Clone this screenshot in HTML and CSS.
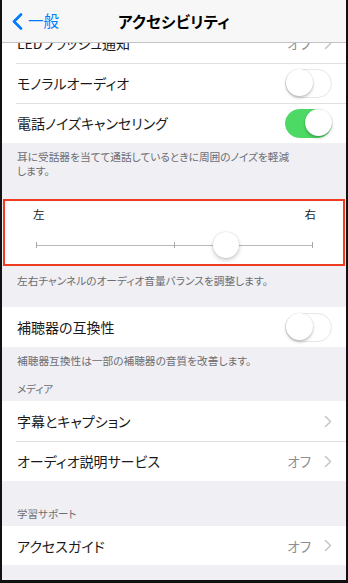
FILE: index.html
```html
<!DOCTYPE html>
<html lang="ja">
<head>
<meta charset="utf-8">
<title>アクセシビリティ</title>
<link rel="stylesheet" href="styles.css">
</head>
<body>
<div class="screen">
  <header class="nav">
    <a class="back">
      <svg class="back-chev" width="11" height="17" viewBox="0 0 11 17"><path d="M9 1.5 L2 8.5 L9 15.5" fill="none" stroke="#007aff" stroke-width="2.6" stroke-linecap="round" stroke-linejoin="round"/></svg>
      <span>一般</span>
    </a>
    <h1 class="title">アクセシビリティ</h1>
    <span class="nav-spacer"></span>
  </header>
  <main class="scroll">
    <section class="group group-first">
      <div class="row"><span class="label">LEDフラッシュ通知</span><span class="detail">オフ</span><svg class="chev" width="8" height="13" viewBox="0 0 8 13"><path d="M1.5 1.5 L6.5 6.5 L1.5 11.5" fill="none" stroke="#c7c7cc" stroke-width="1.6" stroke-linecap="round" stroke-linejoin="round"/></svg></div>
      <div class="row"><span class="label">モノラルオーディオ</span><span class="toggle"><span class="knob"></span></span></div>
      <div class="row"><span class="label">電話ノイズキャンセリング</span><span class="toggle on"><span class="knob"></span></span></div>
    </section>
    <p class="footer footer-1">耳に受話器を当てて通話しているときに周囲のノイズを軽減<br>します。</p>
    <section class="balance">
      <div class="balance-labels"><span>左</span><span>右</span></div>
      <div class="slider">
        <span class="track"></span>
        <span class="tick tick-l"></span>
        <span class="tick tick-m"></span>
        <span class="tick tick-r"></span>
        <span class="thumb" style="left: 68.6%"></span>
      </div>
    </section>
    <p class="footer footer-2">左右チャンネルのオーディオ音量バランスを調整します。</p>
    <section class="group">
      <div class="row"><span class="label">補聴器の互換性</span><span class="toggle"><span class="knob"></span></span></div>
    </section>
    <p class="footer footer-3">補聴器互換性は一部の補聴器の音質を改善します。</p>
    <p class="header header-media">メディア</p>
    <section class="group">
      <div class="row"><span class="label">字幕とキャプション</span><svg class="chev" width="8" height="13" viewBox="0 0 8 13"><path d="M1.5 1.5 L6.5 6.5 L1.5 11.5" fill="none" stroke="#c7c7cc" stroke-width="1.6" stroke-linecap="round" stroke-linejoin="round"/></svg></div>
      <div class="row"><span class="label">オーディオ説明サービス</span><span class="detail">オフ</span><svg class="chev" width="8" height="13" viewBox="0 0 8 13"><path d="M1.5 1.5 L6.5 6.5 L1.5 11.5" fill="none" stroke="#c7c7cc" stroke-width="1.6" stroke-linecap="round" stroke-linejoin="round"/></svg></div>
    </section>
    <p class="header header-learn">学習サポート</p>
    <section class="group">
      <div class="row row-last"><span class="label">アクセスガイド</span><span class="detail">オフ</span><svg class="chev" width="8" height="13" viewBox="0 0 8 13"><path d="M1.5 1.5 L6.5 6.5 L1.5 11.5" fill="none" stroke="#c7c7cc" stroke-width="1.6" stroke-linecap="round" stroke-linejoin="round"/></svg></div>
    </section>
  </main>
</div>
</body>
</html>
```

FILE: styles.css
```css
* { box-sizing: border-box; }
html, body { margin: 0; padding: 0; background: #000; }
body {
  font-family: "Noto Sans CJK JP", "Noto Sans", sans-serif;
  font-feature-settings: "palt" 1;
  -webkit-font-smoothing: antialiased;
}
.screen {
  width: 348px;
  height: 583px;
  border-left: 2px solid #111;
  border-right: 2px solid #111;
  border-bottom: 3px solid #111;
  background: #efeff4;
  display: flex;
  flex-direction: column;
  overflow: hidden;
}
.nav {
  height: 43px;
  flex: none;
  background: #f7f7f7;
  border-bottom: 1px solid #c4c4c6;
  display: grid;
  grid-template-columns: 1fr auto 1fr;
  align-items: center;
  position: relative;
  z-index: 2;
}
.back {
  display: flex;
  align-items: center;
  gap: 5px;
  padding-left: 10px;
  color: #007aff;
  font-size: 15.5px;
  line-height: 1;
}
.back-chev { display: block; margin-top: 1px; }
.title {
  margin: 0;
  font-size: 15.5px;
  font-weight: 700;
  color: #000;
  letter-spacing: 0.2px;
}
.scroll {
  flex: 1;
  overflow: hidden;
  display: flex;
  flex-direction: column;
}
.group { background: #fff; flex: none; }
.group-first { margin-top: -20px; }
.row {
  height: 40px;
  display: flex;
  align-items: center;
  padding: 0 14px 0 15px;
  position: relative;
}
.row-last { height: 39px; }
.row + .row::before {
  content: "";
  position: absolute;
  top: 0;
  left: 14px;
  right: 0;
  height: 1px;
  background: #e0e0e4;
}
.label {
  flex: 1;
  font-size: 14px;
  color: #1a1a1a;
}
.detail {
  font-size: 13.5px;
  color: #8e8e93;
  margin-right: 13px;
}
.chev { display: block; flex: none; }
.toggle {
  width: 47px;
  height: 29px;
  border-radius: 15px;
  background: #fff;
  border: 1.5px solid #e6e6ea;
  position: relative;
  flex: none;
}
.toggle .knob {
  position: absolute;
  top: -0.5px;
  left: -0.5px;
  width: 27px;
  height: 27px;
  border-radius: 50%;
  background: #fff;
  box-shadow: 0 2px 3px rgba(0,0,0,0.22), 0 0 0 0.5px rgba(0,0,0,0.08);
}
.toggle.on { background: #4cd964; border-color: #4cd964; }
.toggle.on .knob { left: auto; right: -0.5px; }
.footer {
  margin: 0;
  font-size: 10.7px;
  line-height: 14px;
  color: #6d6d72;
  padding: 0 15px;
  flex: none;
}
.footer-1 { padding-top: 7px; padding-bottom: 21px; }
.footer-2 { padding-top: 8px; padding-bottom: 19px; }
.footer-3 { padding-top: 7px; padding-bottom: 14px; }
.header {
  margin: 0;
  font-size: 10.5px;
  line-height: 13px;
  color: #6d6d72;
  padding: 0 15px 6px;
  flex: none;
}
.header-learn { padding-top: 26px; }
.balance {
  flex: none;
  height: 67px;
  margin: 0 1px;
  background: #fff;
  border: 2px solid #ef3b22;
  padding: 7px 30px 0 31px;
}
.balance-labels {
  display: flex;
  justify-content: space-between;
  margin: 0 -3px 0 -3px;
  font-size: 11.5px;
  line-height: 13px;
  color: #222;
}
.slider {
  position: relative;
  height: 28px;
  margin-top: 10px;
}
.track {
  position: absolute;
  left: 0;
  right: 0;
  top: 13.5px;
  height: 1px;
  background: #b9b9bd;
}
.tick {
  position: absolute;
  top: 11px;
  width: 1px;
  height: 6px;
  background: #a9a9ad;
}
.tick-l { left: 0; }
.tick-m { left: 50%; margin-left: -1px; }
.tick-r { right: 0; }
.thumb {
  position: absolute;
  top: 1px;
  width: 26px;
  height: 26px;
  margin-left: -13px;
  border-radius: 50%;
  background: #fff;
  box-shadow: 0 2px 4px rgba(0,0,0,0.22), 0 0 0 0.5px rgba(0,0,0,0.08);
}
```
